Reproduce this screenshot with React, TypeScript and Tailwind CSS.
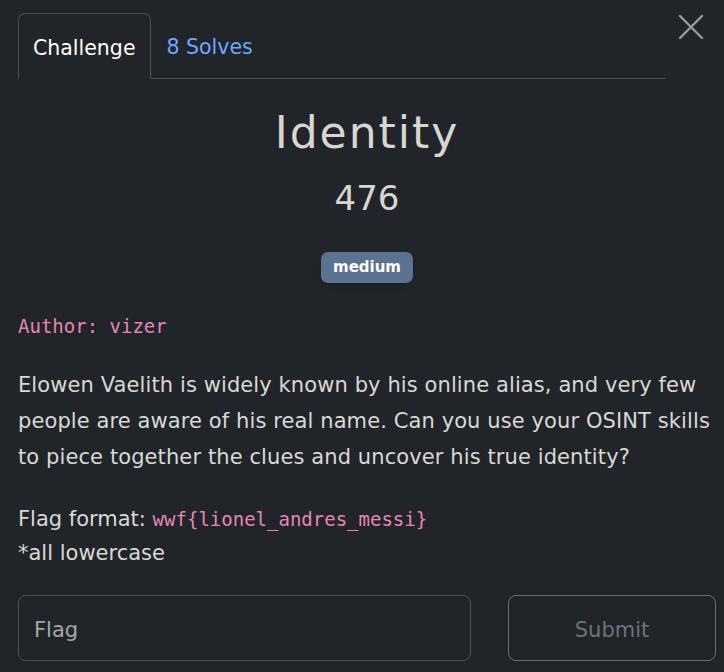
import React from "react";

const sans = "font-['DejaVu_Sans','Noto_Sans',sans-serif]";
const mono = "font-['DejaVu_Sans_Mono','Liberation_Mono',monospace]";

const CloseIcon: React.FC = () => (
  <svg width="26" height="26" viewBox="0 0 26 26" fill="none">
    <path d="M2 2L24 24M24 2L2 24" stroke="#9b9c9e" strokeWidth="2.4" strokeLinecap="round" />
  </svg>
);

const App: React.FC = () => {
  return (
    <div className={`w-[724px] h-[672px] bg-[#212529] overflow-hidden ${sans}`}>
      <div className="flex items-start pt-[13px] pl-[18px]">
        <ul className="flex w-[647px] border-b border-[#4b4f54]">
          <li className="-mb-px h-[66px] px-[14px] pt-[4px] flex items-center border border-[#4b4f54] border-b-[#212529] rounded-t-[7px] text-[20.5px] text-white">
            Challenge
          </li>
          <li className="h-[65px] px-[16px] pt-[3px] flex items-center text-[20.5px] text-[#6ea8fe]">8 Solves</li>
        </ul>
        <button className="ml-[13px] mt-[1px]">
          <CloseIcon />
        </button>
      </div>

      <div className="pl-[18px] pr-[8px]">
        <h2 className="mt-[29px] text-center text-[44px] leading-[50px] tracking-[2px] text-[#d6d7d3]">Identity</h2>
        <h3 className="mt-[19px] text-center text-[34px] leading-[43px] text-[#d6d7d3]">476</h3>
        <div className="mt-[32px] flex justify-center">
          <span className="h-[31px] w-[92px] rounded-[7px] bg-[#5c7291] text-white text-[15px] font-bold flex items-center justify-center shadow-md">
            medium
          </span>
        </div>

        <p className={`mt-[31px] ${mono} text-[19px] leading-[24px] text-[#e685b5]`}>Author: vizer</p>

        <p className="mt-[29px] text-[21px] leading-[36px] tracking-[0.1px] text-[#d8d9d5] whitespace-nowrap">
          Elowen Vaelith is widely known by his online alias, and very few
          <br />
          people are aware of his real name. Can you use your OSINT skills
          <br />
          to piece together the clues and uncover his true identity?
        </p>

        <div className="mt-[27px] text-[21px] leading-[34px] text-[#d8d9d5]">
          <div>
            Flag format: <code className={`${mono} text-[19px] text-[#e685b5]`}>wwf{"{"}lionel_andres_messi{"}"}</code>
          </div>
          <div>*all lowercase</div>
        </div>

        <div className="mt-[25px] flex gap-[37px]">
          <div className="w-[453px] h-[66px] rounded-[8px] border border-[#4b4f54] flex items-center px-[15px] pt-[5px] text-[21px] text-[#a4a6a8]">
            Flag
          </div>
          <button className="w-[208px] h-[66px] rounded-[8px] border border-[#6c7075] pt-[5px] text-[21px] text-[#6c737a]">
            Submit
          </button>
        </div>
      </div>
    </div>
  );
};

export default App;
